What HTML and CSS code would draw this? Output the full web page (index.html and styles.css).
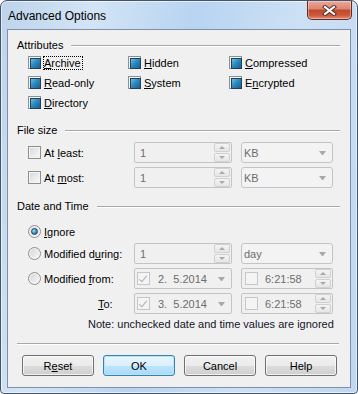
FILE: index.html
```html
<!DOCTYPE html>
<html lang="en">
<head>
  <meta charset="UTF-8" />
  <title>Advanced Options</title>
  <link rel="stylesheet" href="styles.css">
</head>
<body>

  <div class="window">
    <div class="titlebar">
      <span class="title">Advanced Options</span>
      <button class="close" aria-label="Close">
        <svg width="15" height="11" viewBox="0 0 15 11">
          <path d="M3 2 L12 9 M12 2 L3 9" stroke="#4a2a25" stroke-width="4" stroke-linecap="square"/>
          <path d="M3 2 L12 9 M12 2 L3 9" stroke="#ffffff" stroke-width="2.2" stroke-linecap="square"/>
        </svg>
      </button>
    </div>

    <div class="client">
      <div class="group-title"><span>Attributes</span></div>
      <div class="attrs">
        <label class="check"><span class="box mixed"></span><span class="text focus"><u>A</u>rchive</span></label>
        <label class="check"><span class="box mixed"></span><span class="text"><u>H</u>idden</span></label>
        <label class="check"><span class="box mixed"></span><span class="text"><u>C</u>ompressed</span></label>
        <label class="check"><span class="box mixed"></span><span class="text"><u>R</u>ead-only</span></label>
        <label class="check"><span class="box mixed"></span><span class="text"><u>S</u>ystem</span></label>
        <label class="check"><span class="box mixed"></span><span class="text">E<u>n</u>crypted</span></label>
        <label class="check"><span class="box mixed"></span><span class="text"><u>D</u>irectory</span></label>
      </div>

      <div class="group-title size-title"><span>File size</span></div>
      <div class="row first-size">
        <label class="check lbl"><span class="box"></span><span class="text">At <u>l</u>east:</span></label>
        <div class="spin"><span class="val">1</span><span class="arrows"><i class="up"></i><i class="down"></i></span></div>
        <div class="combo"><span class="val">KB</span><i class="drop"></i></div>
      </div>
      <div class="row">
        <label class="check lbl"><span class="box"></span><span class="text">At <u>m</u>ost:</span></label>
        <div class="spin"><span class="val">1</span><span class="arrows"><i class="up"></i><i class="down"></i></span></div>
        <div class="combo"><span class="val">KB</span><i class="drop"></i></div>
      </div>

      <div class="group-title date-title"><span>Date and Time</span></div>
      <label class="check ignore"><span class="radio on"></span><span class="text"><u>I</u>gnore</span></label>
      <div class="row during">
        <label class="check lbl"><span class="radio"></span><span class="text">Modified d<u>u</u>ring:</span></label>
        <div class="spin"><span class="val">1</span><span class="arrows"><i class="up"></i><i class="down"></i></span></div>
        <div class="combo"><span class="val">day</span><i class="drop"></i></div>
      </div>
      <div class="row">
        <label class="check lbl"><span class="radio"></span><span class="text">Modified <u>f</u>rom:</span></label>
        <div class="date"><span class="box ticked"></span><span class="val">2.&nbsp; 5.2014</span><i class="drop"></i></div>
        <div class="time"><span class="box"></span><span class="val">6:21:58</span><span class="arrows"><i class="up"></i><i class="down"></i></span></div>
      </div>
      <div class="row to-row">
        <label class="lbl to"><u>T</u>o:</label>
        <div class="date"><span class="box ticked"></span><span class="val">3.&nbsp; 5.2014</span><i class="drop"></i></div>
        <div class="time"><span class="box"></span><span class="val">6:21:58</span><span class="arrows"><i class="up"></i><i class="down"></i></span></div>
      </div>

      <p class="note">Note: unchecked date and time values are ignored</p>

      <div class="separator"></div>

      <div class="buttons">
        <button class="btn">R<u>e</u>set</button>
        <button class="btn default">OK</button>
        <button class="btn">Cancel</button>
        <button class="btn">Help</button>
      </div>
    </div>
  </div>

</body>
</html>
```

FILE: styles.css
```css
* {
  box-sizing: border-box;
}

body {
  margin: 0;
  font-family: 'Liberation Sans', Arial, sans-serif;
  font-size: 11px;
  color: #000;
  background: #ffffff;
}

u {
  text-decoration: underline;
  text-underline-offset: 1px;
}

.window {
  width: 358px;
  height: 394px;
  border: 1px solid #44546a;
  border-radius: 7px 7px 4px 4px;
  background: linear-gradient(100deg, #bdd4ec 0%, #d3e4f5 22%, #b8d4f1 46%, #cde1f5 72%, #c0d7ef 100%);
  box-shadow: inset 0 0 0 1px rgba(255,255,255,0.6);
  padding: 0 6px 5px 6px;
  display: flex;
  flex-direction: column;
}

.titlebar {
  height: 28px;
  position: relative;
  display: flex;
  align-items: center;
  padding-left: 1px;
}

.title {
  font-size: 12px;
  color: #000;
  margin-top: 2px;
}

.close {
  position: absolute;
  right: -1px;
  top: 0;
  width: 45px;
  height: 19px;
  border: 1px solid #6b2a20;
  border-top: none;
  border-radius: 0 0 5px 5px;
  background: linear-gradient(#e9a99b 0%, #dd8470 45%, #c3462c 50%, #cc5a3e 80%, #e0907a 100%);
  box-shadow: inset 0 0 0 1px rgba(255,255,255,0.35);
  padding: 0;
  display: flex;
  align-items: center;
  justify-content: center;
}

.client {
  flex: 1;
  background: #f0f0f0;
  border: 1px solid #7f90a6;
  padding: 9px 10px 0 9px;
}

.group-title {
  display: flex;
  align-items: center;
  height: 13px;
  line-height: 13px;
}

.group-title::after {
  content: '';
  flex: 1;
  height: 1px;
  margin-left: 8px;
  background: #a8a8a8;
  box-shadow: 0 1px 0 #ffffff;
}

.attrs {
  display: grid;
  grid-template-columns: 100px 101px auto;
  row-gap: 7px;
  margin: 4px 0 0 11px;
}

.check {
  display: flex;
  align-items: center;
  height: 13px;
  line-height: 13px;
}

.check .text {
  margin-left: 2px;
  padding: 0 1px 0 0;
  border: 1px solid transparent;
  line-height: 12px;
}

.check .text.focus {
  border: 1px dotted #000;
}

.box {
  width: 13px;
  height: 13px;
  flex: none;
  border: 1px solid #8e8f8f;
  background: linear-gradient(135deg, #d9d9d9, #f9f9f9);
  box-shadow: inset 0 0 0 1px #f4f4f4;
}

.box.mixed {
  background: #f4f4f4;
  padding: 1px;
}

.box.mixed::before {
  content: '';
  display: block;
  width: 9px;
  height: 9px;
  border: 1px solid #213f5e;
  background: linear-gradient(135deg, #6cc1e4 0%, #2c89bd 45%, #1b5f8f 100%);
}

.radio {
  width: 13px;
  height: 13px;
  flex: none;
  border-radius: 50%;
  border: 1px solid #8e8f8f;
  background: linear-gradient(135deg, #d4d4d4, #fafafa);
  box-shadow: inset 0 0 0 1px #f6f6f6;
  display: flex;
  align-items: center;
  justify-content: center;
}

.radio.on::before {
  content: '';
  width: 5px;
  height: 5px;
  border-radius: 50%;
  border: 1px solid #1c4a6e;
  background: radial-gradient(circle at 35% 35%, #a7e0f7, #2a86bb 60%, #174e78);
}

.size-title {
  margin-top: 15px;
}

.date-title {
  margin-top: 12px;
}

.row {
  display: flex;
  align-items: center;
  height: 21px;
  margin-top: 4px;
  margin-left: 11px;
}

.row.first-size {
  margin-top: 5px;
}

.lbl {
  width: 106px;
  flex: none;
}

.to {
  padding-left: 70px;
}

.spin,
.combo,
.date,
.time {
  height: 21px;
  border: 1px solid #c2c5c8;
  border-radius: 2px;
  background: #f0f0f0;
  color: #6d6d6d;
  display: flex;
  align-items: center;
  position: relative;
}

.spin,
.date {
  width: 98px;
}

.combo,
.time {
  width: 92px;
  margin-left: 9px;
}

.combo {
  border-radius: 3px;
  background: #f3f3f3;
}

.spin .val {
  padding-left: 5px;
  flex: 1;
}

.combo .val {
  padding-left: 2px;
  flex: 1;
}

.arrows {
  width: 17px;
  height: 19px;
  display: flex;
  flex-direction: column;
  gap: 1px;
  padding: 0 1px 0 0;
}

.arrows i {
  flex: 1;
  border: 1px solid #d0d0d0;
  border-radius: 2px;
  background: linear-gradient(#f4f4f4, #e6e6e6);
  display: flex;
  align-items: center;
  justify-content: center;
}

.arrows i::before {
  content: '';
  border-left: 3px solid transparent;
  border-right: 3px solid transparent;
}

.arrows .up::before {
  border-bottom: 3px solid #a9a9a9;
}

.arrows .down::before {
  border-top: 3px solid #a9a9a9;
}

.drop {
  width: 7px;
  height: 4px;
  margin-right: 6px;
  border-left: 3.5px solid transparent;
  border-right: 3.5px solid transparent;
  border-top: 4px solid #a9a9a9;
}

.date .box,
.time .box {
  width: 13px;
  height: 13px;
  margin-left: 2px;
  border-color: #c6c6c6;
  background: #f4f4f4;
  box-shadow: none;
}

.time .box {
  margin-left: 3px;
}

.box.ticked {
  position: relative;
}

.box.ticked::before {
  content: '';
  position: absolute;
  left: 3px;
  top: 1px;
  width: 3px;
  height: 7px;
  border-right: 1.5px solid #b0b0b0;
  border-bottom: 1.5px solid #b0b0b0;
  transform: rotate(40deg);
}

.date .val {
  flex: 1;
  padding-left: 8px;
}

.time .val {
  flex: 1;
  padding-left: 7px;
}

.ignore {
  margin: 12px 0 0 11px;
}

.row.during {
  margin-top: 5px;
}

.row.to-row {
  margin-top: 4px;
}

.note {
  margin: 4px 0 0 71px;
  line-height: 13px;
  color: #141428;
}

.separator {
  height: 1px;
  margin-top: 12px;
  margin-right: 1px;
  background: #a8a8a8;
  box-shadow: 0 1px 0 #ffffff;
}

.buttons {
  display: flex;
  gap: 9px;
  margin: 11px 0 0 5px;
}

.btn {
  width: 72px;
  height: 21px;
  padding: 0;
  font-family: inherit;
  font-size: 11px;
  color: #000;
  border: 1px solid #707070;
  border-radius: 3px;
  background: linear-gradient(#f2f2f2 0%, #ebebeb 50%, #dddddd 51%, #cfcfcf 100%);
  box-shadow: inset 0 0 0 1px rgba(255,255,255,0.7);
}

.btn.default {
  border-color: #3c7fb1;
  background: linear-gradient(#eaf6fd 0%, #d9f0fc 50%, #bee6fd 51%, #a7d9f5 100%);
  box-shadow: inset 0 0 0 1px #b6e5f8;
}
```
